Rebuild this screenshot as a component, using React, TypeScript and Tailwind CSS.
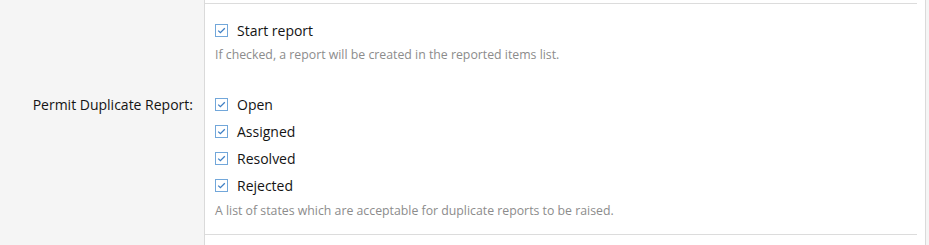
import React from "react";

function CheckBox() {
  return (
    <span className="flex h-[13px] w-[13px] shrink-0 items-center justify-center border border-[#72a7da] bg-white">
      <svg viewBox="0 0 11 11" className="h-[11px] w-[11px]">
        <path d="M2.2 5.6 L4.4 7.7 L8.8 3.2" fill="none" stroke="#3f7fc4" strokeWidth="1.3" />
      </svg>
    </span>
  );
}

function CheckRow({ label }: { label: string }) {
  return (
    <label className="flex h-[27px] items-center gap-[9px] text-[14px] text-[#141414]">
      <CheckBox />
      <span>{label}</span>
    </label>
  );
}

const states = ["Open", "Assigned", "Resolved", "Rejected"];

export default function App() {
  return (
    <div
      className="flex h-[245px] w-[929px] bg-[#f5f5f5]"
      style={{ fontFamily: "'Segoe UI', 'Open Sans', 'Noto Sans', sans-serif" }}
    >
      {/* label column */}
      <div className="w-[204px] shrink-0 pt-[91px] pr-[11px] text-right">
        <div className="h-[27px] text-[14px] leading-[27px] text-[#141414]">
          Permit Duplicate Report:
        </div>
      </div>

      {/* content column */}
      <div className="w-[722px] shrink-0 border-x border-[#dadada] bg-white pr-[8px]">
        <div className="mt-[3px] border-y border-[#dcdcdc] pl-[10px] pt-[13px] pb-[14px]">
          <CheckRow label="Start report" />
          <p className="mt-[2px] h-[18px] text-[12.3px] leading-[18px] text-[#8c8c8c]">
            If checked, a report will be created in the reported items list.
          </p>

          <div className="mt-[27px]">
            {states.map((s) => (
              <CheckRow key={s} label={s} />
            ))}
          </div>
          <p className="mt-[3px] h-[18px] text-[12.3px] leading-[18px] text-[#8c8c8c]">
            A list of states which are acceptable for duplicate reports to be raised.
          </p>
        </div>
      </div>
    </div>
  );
}
